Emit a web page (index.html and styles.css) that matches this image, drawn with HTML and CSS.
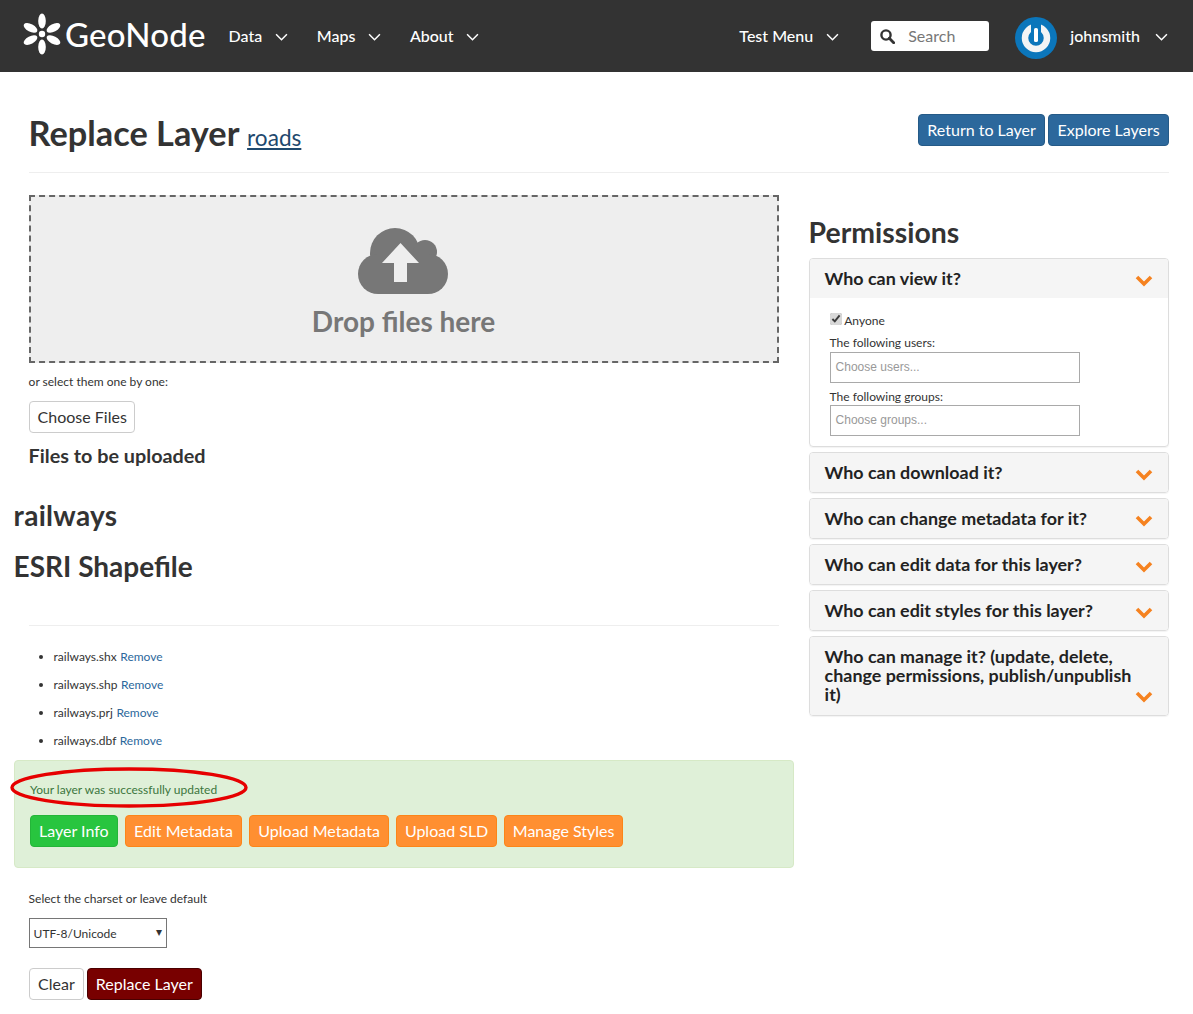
FILE: index.html
```html
<!DOCTYPE html>
<html lang="en">
<head>
    <meta charset="UTF-8">
    <meta name="viewport" content="width=device-width, initial-scale=1.0">
    <title>Replace Layer</title>
    <link rel="stylesheet" href="styles.css">
</head>
<body>
    <!-- Top navigation -->
    <nav class="navbar">
        <a class="brand" href="#">
            <svg class="brand-logo" width="42" height="42" viewBox="0 0 42 42">
                <g fill="#fff">
                    <ellipse cx="21" cy="8" rx="3.8" ry="7.5"/>
                    <ellipse cx="21" cy="34" rx="3.8" ry="7.5"/>
                    <ellipse cx="21" cy="8" rx="3.8" ry="7.5" transform="rotate(62 21 21)"/>
                    <ellipse cx="21" cy="8" rx="3.8" ry="7.5" transform="rotate(118 21 21)"/>
                    <ellipse cx="21" cy="8" rx="3.8" ry="7.5" transform="rotate(242 21 21)"/>
                    <ellipse cx="21" cy="8" rx="3.8" ry="7.5" transform="rotate(298 21 21)"/>
                    <circle cx="21" cy="21" r="3.2"/>
                </g>
            </svg>
            <span class="brand-name">GeoNode</span>
        </a>
        <ul class="nav-links">
            <li><a href="#">Data <svg class="caret" viewBox="0 0 12 7"><path d="M1 1l5 5 5-5" fill="none" stroke="#fff" stroke-width="1.4"/></svg></a></li>
            <li><a href="#">Maps <svg class="caret" viewBox="0 0 12 7"><path d="M1 1l5 5 5-5" fill="none" stroke="#fff" stroke-width="1.4"/></svg></a></li>
            <li><a href="#">About <svg class="caret" viewBox="0 0 12 7"><path d="M1 1l5 5 5-5" fill="none" stroke="#fff" stroke-width="1.4"/></svg></a></li>
        </ul>
        <div class="nav-right">
            <a class="nav-test" href="#">Test Menu <svg class="caret" viewBox="0 0 12 7"><path d="M1 1l5 5 5-5" fill="none" stroke="#fff" stroke-width="1.4"/></svg></a>
            <div class="search">
                <svg width="15" height="15" viewBox="0 0 15 15"><circle cx="6" cy="6" r="4.6" fill="none" stroke="#333" stroke-width="2.4"/><path d="M9.3 9.3l4.4 4.4" stroke="#333" stroke-width="2.8" stroke-linecap="round"/></svg>
                <span>Search</span>
            </div>
            <svg class="avatar" width="42" height="42" viewBox="0 0 42 42">
                <circle cx="21" cy="21" r="21" fill="#0b76bb"/>
                <circle cx="21" cy="21" r="11" fill="none" stroke="#f2f4f5" stroke-width="6.5"/>
                <rect x="16" y="5" width="10" height="10" fill="#0b76bb"/>
                <rect x="19" y="11" width="4" height="14" rx="1.6" fill="#fff"/>
            </svg>
            <a class="nav-user" href="#">johnsmith <svg class="caret" viewBox="0 0 12 7"><path d="M1 1l5 5 5-5" fill="none" stroke="#fff" stroke-width="1.4"/></svg></a>
        </div>
    </nav>

    <div class="container">
        <div class="page-header">
            <h1>Replace Layer <small><a href="#">roads</a></small></h1>
            <div class="header-actions">
                <a class="btn btn-primary" href="#">Return to Layer</a>
                <a class="btn btn-primary" href="#">Explore Layers</a>
            </div>
        </div>

        <div class="columns">
            <div class="col-main">
                <div class="drop-zone">
                    <svg width="92" height="68" viewBox="0 0 92 68">
                        <g fill="#777">
                            <circle cx="37" cy="26" r="25"/>
                            <circle cx="67" cy="25" r="12"/>
                            <circle cx="20" cy="47" r="20"/>
                            <circle cx="70" cy="47" r="20"/>
                            <rect x="20" y="25" width="50" height="42"/>
                        </g>
                        <path fill="#eee" d="M42.500 16L61 36H49V55H36V36H24z"/>
                    </svg>
                    <div class="drop-text">Drop files here</div>
                </div>
                <p class="select-note">or select them one by one:</p>
                <a class="btn btn-default choose-files" href="#">Choose Files</a>
                <h3 class="files-title">Files to be uploaded</h3>
                <h2 class="file-name">railways</h2>
                <h2 class="file-type">ESRI Shapefile</h2>
                <hr class="file-rule">
                <ul class="file-list">
                    <li>railways.shx <a href="#">Remove</a></li>
                    <li>railways.shp <a href="#">Remove</a></li>
                    <li>railways.prj <a href="#">Remove</a></li>
                    <li>railways.dbf <a href="#">Remove</a></li>
                </ul>
                <div class="alert">
                    <svg class="circle-mark" width="240" height="42" viewBox="0 0 240 42"><ellipse cx="119" cy="20.500" rx="117" ry="18.500" fill="none" stroke="#e60000" stroke-width="3.400"/></svg>
                    <p>Your layer was successfully updated</p>
                    <div class="alert-actions">
                        <a class="btn btn-green" href="#">Layer Info</a>
                        <a class="btn btn-orange btn-edit" href="#">Edit Metadata</a>
                        <a class="btn btn-orange" href="#">Upload Metadata</a>
                        <a class="btn btn-orange" href="#">Upload SLD</a>
                        <a class="btn btn-orange btn-manage" href="#">Manage Styles</a>
                    </div>
                </div>
                <p class="charset-label">Select the charset or leave default</p>
                <div class="charset-select">UTF-8/Unicode <span class="select-arrow">&#9662;</span></div>
                <div class="form-actions">
                    <a class="btn btn-default btn-clear" href="#">Clear</a>
                    <a class="btn btn-danger" href="#">Replace Layer</a>
                </div>
            </div>

            <aside class="col-side">
                <h2 class="side-title">Permissions</h2>
                <div class="panel">
                    <div class="panel-heading">
                        <span>Who can view it?</span>
                        <svg class="chev" width="18" height="12" viewBox="0 0 18 12"><path d="M2 2l7 7 7-7" fill="none" stroke="#f58220" stroke-width="3.6"/></svg>
                    </div>
                    <div class="panel-body">
                        <label class="anyone"><input type="checkbox" checked> Anyone</label>
                        <div class="perm-label">The following users:</div>
                        <div class="perm-input">Choose users...</div>
                        <div class="perm-label perm-label-next">The following groups:</div>
                        <div class="perm-input">Choose groups...</div>
                    </div>
                </div>
                <div class="panel">
                    <div class="panel-heading">
                        <span>Who can download it?</span>
                        <svg class="chev" width="18" height="12" viewBox="0 0 18 12"><path d="M2 2l7 7 7-7" fill="none" stroke="#f58220" stroke-width="3.6"/></svg>
                    </div>
                </div>
                <div class="panel">
                    <div class="panel-heading">
                        <span>Who can change metadata for it?</span>
                        <svg class="chev" width="18" height="12" viewBox="0 0 18 12"><path d="M2 2l7 7 7-7" fill="none" stroke="#f58220" stroke-width="3.6"/></svg>
                    </div>
                </div>
                <div class="panel">
                    <div class="panel-heading">
                        <span>Who can edit data for this layer?</span>
                        <svg class="chev" width="18" height="12" viewBox="0 0 18 12"><path d="M2 2l7 7 7-7" fill="none" stroke="#f58220" stroke-width="3.6"/></svg>
                    </div>
                </div>
                <div class="panel">
                    <div class="panel-heading">
                        <span>Who can edit styles for this layer?</span>
                        <svg class="chev" width="18" height="12" viewBox="0 0 18 12"><path d="M2 2l7 7 7-7" fill="none" stroke="#f58220" stroke-width="3.6"/></svg>
                    </div>
                </div>
                <div class="panel">
                    <div class="panel-heading panel-heading-tall">
                        <span>Who can manage it? (update, delete, change permissions, publish/unpublish it)</span>
                        <svg class="chev" width="18" height="12" viewBox="0 0 18 12"><path d="M2 2l7 7 7-7" fill="none" stroke="#f58220" stroke-width="3.6"/></svg>
                    </div>
                </div>
            </aside>
        </div>
    </div>
</body>
</html>
```

FILE: styles.css
```css
* {
    box-sizing: border-box;
}

html, body {
    overflow-x: hidden;
}

body {
    font-family: Lato, "Open Sans", sans-serif;
    font-size: 14px;
    line-height: 20px;
    margin: 0;
    color: #333;
    background-color: #fff;
}

a {
    color: #2c689c;
    text-decoration: none;
}

/* Navigation */
.navbar {
    display: flex;
    align-items: center;
    height: 72px;
    padding: 0 25px 0 21px;
    background-color: #333;
    color: #fff;
}

.brand {
    display: flex;
    align-items: center;
    color: #fff;
    margin-right: 23px;
}

.brand-logo {
    flex: none;
    margin: -5px 2px 0 0;
}

.brand-name {
    margin-top: -5px;
    font-size: 33px;
    line-height: 40px;
    font-weight: 500;
    letter-spacing: 0.2px;
}

.nav-links {
    display: flex;
    gap: 29px;
    list-style: none;
    margin: 0;
    padding: 0;
}

.nav-links a,
.nav-test,
.nav-user {
    color: #fff;
    font-size: 16px;
    font-weight: 500;
    white-space: nowrap;
}

.caret {
    width: 13px;
    height: 8px;
    margin-left: 8.5px;
    vertical-align: 1px;
}

.nav-right {
    display: flex;
    align-items: center;
    margin-left: auto;
}

.nav-test {
    margin-right: 32px;
}

.nav-test .caret {
    margin-left: 9px;
}

.search {
    display: flex;
    align-items: center;
    gap: 13px;
    width: 118px;
    height: 30px;
    padding-left: 9px;
    margin-right: 26px;
    border-radius: 3px;
    background-color: #fff;
    color: #777;
    font-size: 16px;
}

.avatar {
    margin: 3px 13px 0 0;
}

.nav-user .caret {
    margin-left: 11px;
}

/* Page */
.container {
    width: 1140.4px;
    margin-left: 28.6px;
}

.page-header {
    display: flex;
    justify-content: space-between;
    height: 101px;
    padding-top: 41px;
    border-bottom: 1px solid #eee;
}

.page-header h1 {
    margin: 0;
    font-size: 34.3px;
    line-height: 40px;
    font-weight: 700;
}

.page-header small {
    font-size: 22.6px;
    font-weight: 400;
}

.page-header small a {
    color: #1f496e;
    text-decoration: underline;
}

.header-actions {
    display: flex;
    gap: 3px;
    padding-top: 1px;
}

.btn {
    display: inline-block;
    height: 32px;
    padding: 5px 8px;
    border: 1px solid transparent;
    border-radius: 4px;
    font-size: 16px;
    line-height: 20px;
    white-space: nowrap;
}

.btn-primary {
    background-color: #2c689c;
    border-color: #255a87;
    color: #fff;
}

.header-actions .btn-primary {
    padding: 5px 8.3px;
}

.btn-default {
    background-color: #fff;
    border-color: #ccc;
    color: #333;
}

.btn-clear {
    padding: 5px 8.5px;
}

.btn-green {
    background-color: #28c53f;
    border-color: #24b539;
    color: #fff;
}

.btn-orange {
    background-color: #ff8f31;
    border-color: #fc8518;
    color: #fff;
}

.btn-edit {
    padding: 5px 8.5px;
}

.btn-manage {
    padding: 5px 7.5px;
}

.btn-danger {
    background-color: #780000;
    border-color: #4a0000;
    color: #fff;
}

.columns {
    display: flex;
    align-items: flex-start;
    gap: 30px;
    padding-top: 22px;
}

.col-main {
    width: 750px;
    flex: none;
}

.col-side {
    width: 360.4px;
    flex: none;
}

/* Upload */
.drop-zone {
    display: flex;
    flex-direction: column;
    align-items: center;
    height: 168px;
    padding-top: 30px;
    border: 2px dashed #666;
    background-color: #eee;
}

.drop-zone svg {
    margin-left: 1.5px;
}

.drop-text {
    margin-top: 6px;
    font-size: 28px;
    line-height: 40px;
    font-weight: 700;
    color: #777;
}

.select-note {
    margin: 9px 0 9px;
    font-size: 12px;
    line-height: 20px;
}

.choose-files {
    display: block;
    width: 106px;
}

.files-title {
    margin: 11px 0 0;
    font-size: 19.800px;
    line-height: 23px;
    font-weight: 700;
}

.file-name,
.file-type {
    margin: 0 0 0 -15px;
    font-size: 28px;
    line-height: 31px;
    font-weight: 700;
}

.file-name {
    margin-top: 33px;
    letter-spacing: 0.3px;
}

.file-type {
    margin-top: 20px;
}

.file-rule {
    margin: 43px 0 0;
    border: 0;
    border-top: 1px solid #eee;
}

.file-list {
    margin: 17px 0 0;
    padding-left: 25px;
    font-size: 12px;
}

.file-list li {
    height: 28px;
    line-height: 28px;
}

.file-list a {
    margin-left: 0.5px;
}

/* Result */
.alert {
    position: relative;
    width: 780px;
    height: 108px;
    margin: 5px 0 0 -14.6px;
    padding: 19px 15px 0;
    border: 1px solid #d6e9c6;
    border-radius: 4px;
    background-color: #dff0d8;
    color: #3c763d;
    font-size: 12px;
}

.alert p {
    margin: 0 0 15px;
}

.circle-mark {
    position: absolute;
    top: 6px;
    left: -5px;
}

.alert-actions {
    display: flex;
    gap: 7px;
}

.charset-label {
    margin: 21px 0 0;
    font-size: 12px;
}

.charset-select {
    position: relative;
    width: 138px;
    height: 30px;
    margin-top: 9px;
    padding: 5px 4px;
    border: 1px solid #767676;
    font-size: 12px;
    line-height: 20px;
}

.select-arrow {
    position: absolute;
    top: 3px;
    right: 4px;
    font-size: 12px;
}

.form-actions {
    display: flex;
    gap: 2.5px;
    margin-top: 20px;
}

/* Permissions */
.side-title {
    margin: 22px 0 10px;
    font-size: 28.400px;
    line-height: 31px;
    font-weight: 700;
}

.panel {
    margin-bottom: 5px;
    border: 1px solid #ddd;
    border-radius: 4px;
    box-shadow: 0 1px 1px rgba(0, 0, 0, 0.05);
    overflow: hidden;
}

.panel-heading {
    display: flex;
    justify-content: space-between;
    align-items: center;
    height: 39px;
    padding: 0 15px;
    background-color: #f5f5f5;
    color: #222;
    font-size: 17.900px;
    line-height: 19px;
    font-weight: 700;
}

.panel-heading .chev {
    flex: none;
    margin-top: 4px;
}

.panel-heading-tall {
    align-items: flex-end;
    height: 78px;
    padding-bottom: 11px;
}

.panel-heading-tall span {
    width: 320px;
}

.panel-heading-tall .chev {
    margin-bottom: 1px;
}

.panel-body {
    height: 148px;
    padding: 13px 20px 0;
    font-size: 12px;
    line-height: 20px;
}

.anyone {
    display: block;
    height: 20px;
}

.anyone input {
    width: 12px;
    height: 12px;
    margin: 0;
    accent-color: #d8d8d8;
}

.perm-label {
    line-height: 18px;
    margin-top: 3px;
}

.perm-label-next {
    line-height: 17px;
    margin-top: 5px;
}

.perm-input {
    width: 250px;
    height: 31px;
    padding: 4px 5px;
    border: 1px solid #a9a9a9;
    font-family: "Liberation Sans", sans-serif;
    color: #999;
}
```
